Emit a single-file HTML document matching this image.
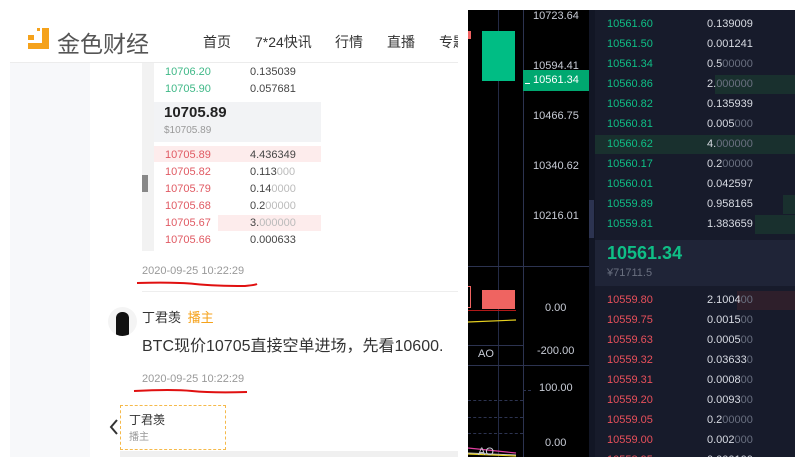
<!DOCTYPE html>
<html><head><meta charset="utf-8"><style>
*{margin:0;padding:0;box-sizing:border-box}
body{width:805px;height:467px;background:#fff;position:relative;overflow:hidden;font-family:"Liberation Sans","Noto Sans CJK SC",sans-serif}
.a{position:absolute;white-space:nowrap}
.g{color:#3fb887}.r{color:#e05a63}.d{color:#444}.l{color:#bbb}
.dg{color:#0fbf86}.dr{color:#e8505b}.dw{color:#d8dbe3}.dl{color:#6a7080}
</style></head><body>
<!-- LEFT -->
<div class="a" style="left:10px;top:10px;width:448px;height:447px;background:#fff;overflow:hidden">
  <div class="a" style="left:0;top:52px;width:80px;height:395px;background:#f7f8fa"></div>
  <div class="a" style="left:0;top:52px;width:448px;height:1px;background:#ececec"></div>
  <div class="a" style="left:32px;top:18px;width:7px;height:21px;background:#f5a21b"></div>
  <div class="a" style="left:18px;top:33px;width:21px;height:6px;background:#f5a21b"></div>
  <div class="a" style="left:18px;top:25px;width:6px;height:5px;background:#f5a21b"></div>
  <div class="a" style="left:27px;top:18px;width:3px;height:3px;background:#f5a21b"></div>
  <div class="a" style="left:47px;top:15px;font-size:23px;color:#555">金色财经</div>
  <div class="a" style="left:193px;top:22px;font-size:14px;color:#333">首页</div>
  <div class="a" style="left:245px;top:22px;font-size:14px;color:#333">7*24快讯</div>
  <div class="a" style="left:325px;top:22px;font-size:14px;color:#333">行情</div>
  <div class="a" style="left:377px;top:22px;font-size:14px;color:#333">直播</div>
  <div class="a" style="left:429px;top:22px;font-size:14px;color:#333">专题</div>
  <div class="a" style="left:132px;top:53px;width:12px;height:188px;background:#f2f2f2"></div>
  <div class="a" style="left:132px;top:165px;width:6px;height:17px;background:#888"></div>
  <div class="a" style="left:144px;top:92px;width:167px;height:40px;background:#f2f3f5"></div>
  <div class="a" style="left:144px;top:136px;width:167px;height:16px;background:#fdecec"></div>
  <div class="a" style="left:208px;top:205px;width:103px;height:16px;background:#fdecec"></div>
  <div style="font-size:11px">
  <div class="a g" style="left:155px;top:56px">10706.20</div><div class="a d" style="left:240px;top:56px">0.135039</div>
  <div class="a g" style="left:155px;top:73px">10705.90</div><div class="a d" style="left:240px;top:73px">0.057681</div>
  <div class="a r" style="left:155px;top:139px">10705.89</div><div class="a d" style="left:240px;top:139px">4.436349</div>
  <div class="a r" style="left:155px;top:156px">10705.82</div><div class="a d" style="left:240px;top:156px">0.113<span class="l">000</span></div>
  <div class="a r" style="left:155px;top:173px">10705.79</div><div class="a d" style="left:240px;top:173px">0.14<span class="l">0000</span></div>
  <div class="a r" style="left:155px;top:190px">10705.68</div><div class="a d" style="left:240px;top:190px">0.2<span class="l">00000</span></div>
  <div class="a r" style="left:155px;top:207px">10705.67</div><div class="a d" style="left:240px;top:207px">3.<span class="l">000000</span></div>
  <div class="a r" style="left:155px;top:224px">10705.66</div><div class="a d" style="left:240px;top:224px">0.000633</div>
  </div>
  <div class="a" style="left:154px;top:94px;font-size:15px;font-weight:bold;color:#222">10705.89</div>
  <div class="a" style="left:154px;top:115px;font-size:10px;color:#999">$10705.89</div>
  <div class="a" style="left:132px;top:255px;font-size:11px;color:#999">2020-09-25 10:22:29</div>
  <svg class="a" style="left:125px;top:270px" width="135" height="12"><path d="M2 3 Q40 2 60 4 T110 6 Q120 5 122 4" stroke="#e01010" stroke-width="2" fill="none"/></svg>
  <div class="a" style="left:132px;top:281px;width:316px;height:1px;background:#eee"></div>
  <div class="a" style="left:98px;top:297px;width:29px;height:29px;border-radius:50%;background:#f4f4f4;overflow:hidden"><div style="position:absolute;left:8px;top:5px;width:13px;height:24px;background:#111;border-radius:6px 6px 0 0"></div></div>
  <div class="a" style="left:132px;top:297px;font-size:13px;color:#333">丁君羡 <span style="color:#f5a21b;margin-left:3px">播主</span></div>
  <div class="a" style="left:132px;top:322px;font-size:16px;color:#333">BTC现价10705直接空单进场，先看10600.</div>
  <div class="a" style="left:132px;top:363px;font-size:11px;color:#999">2020-09-25 10:22:29</div>
  <svg class="a" style="left:122px;top:378px" width="135" height="10"><path d="M2 3 Q40 1 60 3 T115 4" stroke="#e01010" stroke-width="2" fill="none"/></svg>
  <div class="a" style="left:110px;top:395px;width:106px;height:45px;border:1px dashed #f5b94a"></div>
  <div class="a" style="left:119px;top:401px;font-size:12px;color:#333">丁君羡</div>
  <div class="a" style="left:119px;top:418px;font-size:10px;color:#999">播主</div>
  <svg class="a" style="left:98px;top:408px" width="12" height="18"><path d="M9 2 L3 9 L9 16" stroke="#333" stroke-width="2" fill="none"/></svg>
  <div class="a" style="left:110px;top:441px;width:338px;height:14px;background:#f0f0f0"></div>
</div>
<!-- RIGHT -->
<div class="a" style="left:468px;top:10px;width:327px;height:447px;background:#171b2b;overflow:hidden">
  <div class="a" style="left:0;top:0;width:121px;height:447px;background:#000"></div>
  <div class="a" style="left:121px;top:0;width:6px;height:447px;background:#121625"></div>
  <div class="a" style="left:121px;top:190px;width:5px;height:38px;background:#2c3350"></div>
  <div class="a" style="left:30px;top:0;width:1px;height:447px;background:#232a45"></div>
  <div class="a" style="left:55px;top:0;width:1px;height:447px;background:#2c3350"></div>
  <div class="a" style="left:0;top:256px;width:121px;height:1px;background:#2c3350"></div>
  <div class="a" style="left:0;top:335px;width:55px;height:1px;background:#2c3350"></div>
  <div class="a" style="left:0;top:355px;width:121px;height:1px;background:#2c3350"></div>
  <div class="a" style="left:14px;top:21px;width:33px;height:50px;background:#00bd84"></div>
  <div class="a" style="left:0;top:21px;width:3px;height:8px;background:#f06262"></div>
  <div class="a" style="left:14px;top:280px;width:33px;height:19px;background:#ef6461"></div>
  <div class="a" style="left:0;top:276px;width:3px;height:22px;border:1px solid #ef6461;border-left:none"></div>
  <div class="a" style="left:0;top:300px;width:48px;height:1px;background:#b01818"></div>
  <svg class="a" style="left:0;top:300px" width="55" height="150"><path d="M0 12 L48 10" stroke="#e6d020" stroke-width="1.2"/><path d="M0 138 L48 143" stroke="#e040a0" stroke-width="1.2"/><path d="M0 143 L48 145" stroke="#ccc" stroke-width="1"/><path d="M0 144 L48 146" stroke="#e6d020" stroke-width="1.2"/></svg>
  <div class="a" style="left:0;top:390px;width:55px;border-top:1px dashed #2c3350"></div>
  <div class="a" style="left:0;top:407px;width:55px;border-top:1px dashed #2c3350"></div>
  <div class="a" style="left:0;top:423px;width:55px;border-top:1px dashed #2c3350"></div>
  <div class="a" style="left:55px;top:380px;width:8px;border-top:1px dashed #2c3350"></div>
  <div style="font-size:11px;color:#c8ccd6">
  <div class="a" style="left:65px;top:0">10723.64</div>
  <div class="a" style="left:65px;top:50px">10594.41</div>
  <div class="a" style="left:55px;top:60px;width:66px;height:21px;background:#00a870"></div>
  <div class="a" style="left:65px;top:64px;color:#fff">10561.34</div>
  <div class="a" style="left:57px;top:73px;width:5px;height:1px;background:#fff"></div>
  <div class="a" style="left:65px;top:100px">10466.75</div>
  <div class="a" style="left:65px;top:150px">10340.62</div>
  <div class="a" style="left:65px;top:200px">10216.01</div>
  <div class="a" style="left:77px;top:292px">0.00</div>
  <div class="a" style="left:69px;top:335px">-200.00</div>
  <div class="a" style="left:10px;top:338px">AO</div>
  <div class="a" style="left:71px;top:372px">100.00</div>
  <div class="a" style="left:77px;top:427px">0.00</div>
  <div class="a" style="left:10px;top:436px">AO</div>
  </div>
  <div class="a" style="left:247px;top:65px;width:80px;height:19px;background:#19302e"></div>
  <div class="a" style="left:127px;top:125px;width:200px;height:19px;background:#19302e"></div>
  <div class="a" style="left:315px;top:185px;width:12px;height:19px;background:#19302e"></div>
  <div class="a" style="left:287px;top:205px;width:40px;height:19px;background:#19302e"></div>
  <div class="a" style="left:269px;top:281px;width:58px;height:19px;background:#2e1f2b"></div>
  <div class="a" style="left:127px;top:230px;width:200px;height:46px;background:#1f2437"></div>
  <div class="a dg" style="left:139px;top:233px;font-size:18px;font-weight:bold">10561.34</div>
  <div class="a dl" style="left:139px;top:257px;font-size:11px">¥71711.5</div>
  <div style="font-size:11px">
  <div class="a dg" style="left:139px;top:8px">10561.60</div><div class="a dw" style="left:239px;top:8px">0.139009</div>
  <div class="a dg" style="left:139px;top:28px">10561.50</div><div class="a dw" style="left:239px;top:28px">0.001241</div>
  <div class="a dg" style="left:139px;top:48px">10561.34</div><div class="a dw" style="left:239px;top:48px">0.5<span class="dl">00000</span></div>
  <div class="a dg" style="left:139px;top:68px">10560.86</div><div class="a dw" style="left:239px;top:68px">2.<span class="dl">000000</span></div>
  <div class="a dg" style="left:139px;top:88px">10560.82</div><div class="a dw" style="left:239px;top:88px">0.135939</div>
  <div class="a dg" style="left:139px;top:108px">10560.81</div><div class="a dw" style="left:239px;top:108px">0.005<span class="dl">000</span></div>
  <div class="a dg" style="left:139px;top:128px">10560.62</div><div class="a dw" style="left:239px;top:128px">4.<span class="dl">000000</span></div>
  <div class="a dg" style="left:139px;top:148px">10560.17</div><div class="a dw" style="left:239px;top:148px">0.2<span class="dl">00000</span></div>
  <div class="a dg" style="left:139px;top:168px">10560.01</div><div class="a dw" style="left:239px;top:168px">0.042597</div>
  <div class="a dg" style="left:139px;top:188px">10559.89</div><div class="a dw" style="left:239px;top:188px">0.958165</div>
  <div class="a dg" style="left:139px;top:208px">10559.81</div><div class="a dw" style="left:239px;top:208px">1.383659</div>
  <div class="a dr" style="left:139px;top:284px">10559.80</div><div class="a dw" style="left:239px;top:284px">2.1004<span class="dl">00</span></div>
  <div class="a dr" style="left:139px;top:304px">10559.75</div><div class="a dw" style="left:239px;top:304px">0.0015<span class="dl">00</span></div>
  <div class="a dr" style="left:139px;top:324px">10559.63</div><div class="a dw" style="left:239px;top:324px">0.0005<span class="dl">00</span></div>
  <div class="a dr" style="left:139px;top:344px">10559.32</div><div class="a dw" style="left:239px;top:344px">0.03633<span class="dl">0</span></div>
  <div class="a dr" style="left:139px;top:364px">10559.31</div><div class="a dw" style="left:239px;top:364px">0.0008<span class="dl">00</span></div>
  <div class="a dr" style="left:139px;top:384px">10559.20</div><div class="a dw" style="left:239px;top:384px">0.0093<span class="dl">00</span></div>
  <div class="a dr" style="left:139px;top:404px">10559.05</div><div class="a dw" style="left:239px;top:404px">0.2<span class="dl">00000</span></div>
  <div class="a dr" style="left:139px;top:424px">10559.00</div><div class="a dw" style="left:239px;top:424px">0.002<span class="dl">000</span></div>
  <div class="a dr" style="left:139px;top:444px">10558.95</div><div class="a dw" style="left:239px;top:444px">0.000100</div>
  </div>
</div>
</body></html>
